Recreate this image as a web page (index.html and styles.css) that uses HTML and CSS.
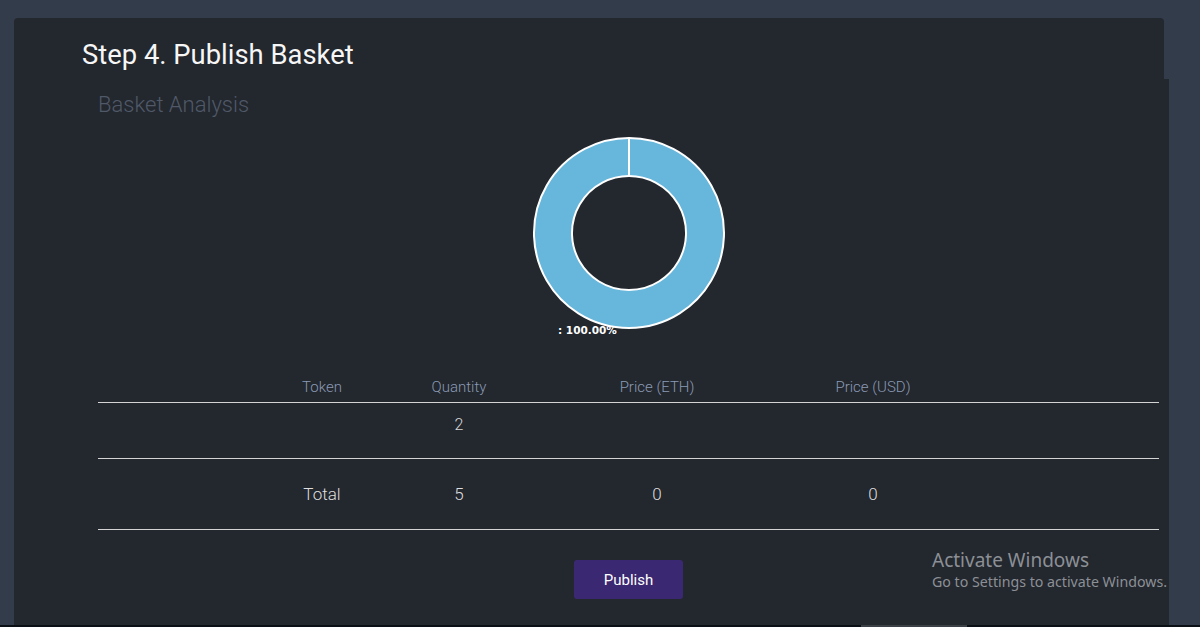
FILE: index.html
```html
<!DOCTYPE html>
<html>
<head>
<meta charset="utf-8">
<link rel="stylesheet" href="styles.css">
</head>
<body>
<div class="page">
  <div class="card">
    <div class="card-head">
      <h1 class="title">Step 4. Publish Basket</h1>
    </div>
    <div class="card-body">
      <h2 class="subtitle">Basket Analysis</h2>
      <div class="chart">
        <svg class="donut" width="200" height="210" viewBox="0 0 200 210">
          <path d="M100 5 A95 95 0 1 1 99.99 5 Z M100 43 A57 57 0 1 0 100.01 43 Z" fill="#67b6dc" fill-rule="evenodd" stroke="#ffffff" stroke-width="2"/>
          <line x1="100" y1="5" x2="100" y2="43" stroke="#ffffff" stroke-width="2"/>
          <text x="29" y="201" class="pct">: 100.00%</text>
        </svg>
      </div>
      <div class="table">
        <div class="row head">
          <div></div><div>Token</div><div>Quantity</div><div>Price (ETH)</div><div>Price (USD)</div><div></div>
        </div>
        <div class="row item">
          <div></div><div></div><div>2</div><div></div><div></div><div></div>
        </div>
        <div class="row total">
          <div></div><div>Total</div><div>5</div><div>0</div><div>0</div><div></div>
        </div>
      </div>
      <div class="actions">
        <button class="publish">Publish</button>
      </div>
      <div class="watermark">
        <div class="wm-title">Activate Windows</div>
        <div class="wm-sub">Go to Settings to activate Windows.</div>
      </div>
    </div>
  </div>
  <div class="scrollbar"><div class="thumb"></div></div>
</div>
</body>
</html>
```

FILE: styles.css
```css
html, body {
  margin: 0;
  padding: 0;
  background: #333c4a;
  font-family: Roboto, "Liberation Sans", sans-serif;
  overflow: hidden;
}
.page {
  width: 1200px;
  height: 627px;
  padding-top: 18px;
  box-sizing: border-box;
  display: flex;
  flex-direction: column;
}
.card {
  margin-left: 14px;
  width: 1150px;
  height: 607px;
  display: flex;
  flex-direction: column;
}
.card-head {
  background: #23272e;
  border-radius: 4px 4px 0 0;
  height: 61px;
  padding: 23px 0 0 68px;
  box-sizing: border-box;
}
.title {
  margin: 0;
  font-size: 27.4px;
  line-height: 28px;
  font-weight: 400;
  color: #f6f6f6;
}
.card-body {
  position: relative;
  background: #23272e;
  width: 1155px;
  flex: 1;
  padding: 15px 10px 0 84px;
  box-sizing: border-box;
}
.subtitle {
  margin: 0;
  font-size: 22px;
  line-height: 22px;
  font-weight: 300;
  color: #505968;
}
.chart {
  display: flex;
  justify-content: center;
  margin-top: 17px;
}
.donut {
  display: block;
  overflow: visible;
}
.pct {
  font-family: "DejaVu Sans", sans-serif;
  font-weight: bold;
  font-size: 10.5px;
  fill: #ffffff;
}
.table {
  margin-top: 27px;
  font-size: 15px;
}
.row {
  display: grid;
  grid-template-columns: 156px 136px 138px 258px 174px 1fr;
  text-align: center;
  border-bottom: 1px solid #d4d4d4;
}
.row.head {
  height: 32px;
  line-height: 34px;
  color: #8a9ab4;
  font-weight: 300;
}
.row.item {
  height: 56px;
  box-sizing: border-box;
  padding-top: 12px;
  line-height: 20px;
  font-size: 16px;
  color: #d6d6d6;
  font-weight: 300;
}
.row.total {
  height: 71px;
  box-sizing: border-box;
  line-height: 71px;
  font-size: 17px;
  color: #dedede;
  font-weight: 300;
}
.actions {
  display: flex;
  justify-content: center;
  margin-top: 30px;
}
.publish {
  width: 109px;
  height: 39px;
  border: none;
  border-radius: 3px;
  background: #3b2872;
  color: #ffffff;
  font-family: Roboto, "Liberation Sans", sans-serif;
  font-size: 15px;
  padding: 0;
}
.watermark {
  position: absolute;
  left: 918px;
  top: 469px;
  color: #8c9096;
  font-family: "Noto Sans", "Open Sans", sans-serif;
}
.wm-title {
  font-size: 19px;
  line-height: 24px;
}
.wm-sub {
  font-size: 14.2px;
  line-height: 20px;
}
.scrollbar {
  height: 2px;
  background: #0b1016;
  flex: none;
}
.thumb {
  margin-left: 861px;
  width: 106px;
  height: 2px;
  background: #3b4047;
}
```
